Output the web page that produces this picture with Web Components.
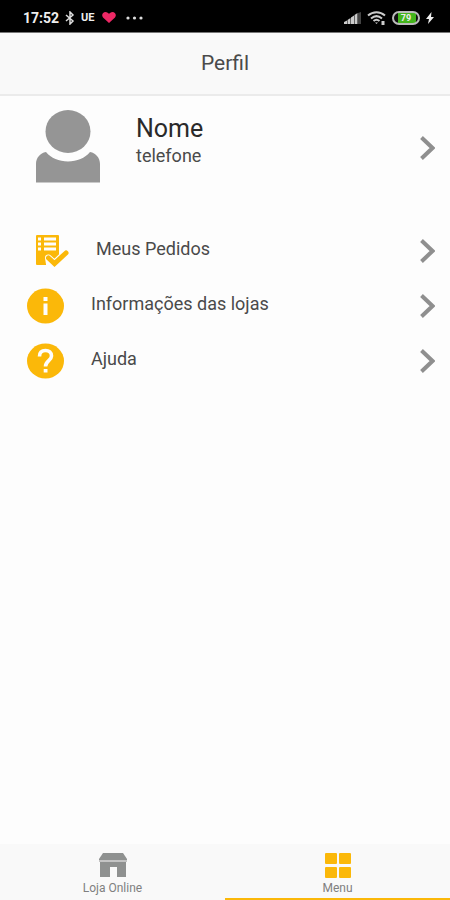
<!DOCTYPE html>
<html lang="pt-BR">
<head>
<meta charset="UTF-8">
<meta name="viewport" content="width=device-width, initial-scale=1">
<title>Perfil</title>
<style>
    body {
        margin: 0;
        font-family: Roboto, "Liberation Sans", sans-serif;
        color: #4a4a4a;
        background-color: #fdfdfd;
        --accent: #fbb809;
    }
</style>
</head>
<body>
<profile-page>
    <status-bar slot="top" time="17:52" battery="79"></status-bar>
    <app-header slot="top">Perfil</app-header>

    <profile-card>
        <span slot="name">Nome</span>
        <span slot="phone">telefone</span>
    </profile-card>

    <menu-list>
        <menu-row class="inset">
            <svg slot="icon" width="33" height="32" viewBox="0 0 33 32" fill="#fbb809" aria-hidden="true">
                <path d="M1 0h21a1 1 0 0 1 1 1v28a1 1 0 0 1-1 1H1a1 1 0 0 1-1-1V1a1 1 0 0 1 1-1z"/>
                <path d="M2 4h3M8 4h12M2 9h3M8 9h12M2 14h3M8 14h12" stroke="#fdfdfd" stroke-width="3"/>
                <path d="M12.500 23l6 5.500L30 17.500V32H14z" fill="#fdfdfd" stroke="#fdfdfd" stroke-width="7" stroke-linejoin="round"/>
                <path d="M12.500 23l6 5.500L30 18" fill="none" stroke="#fbb809" stroke-width="5" stroke-linecap="round"/>
            </svg>
            Meus Pedidos
        </menu-row>
        <menu-row>
            <svg slot="icon" width="37" height="36" viewBox="0 0 37 36" aria-hidden="true">
                <ellipse cx="18.500" cy="18" rx="18.500" ry="17.500" fill="#fbb809"/>
                <path d="M16.500 9h4v4h-4zM16.500 15.500h4V27h-4z" fill="#fdfdfd"/>
            </svg>
            Informações das lojas
        </menu-row>
        <menu-row>
            <svg slot="icon" width="37" height="36" viewBox="0 0 37 36" aria-hidden="true">
                <ellipse cx="18.500" cy="18" rx="18.500" ry="17.500" fill="#fbb809"/>
                <path d="M12.500 13.500c0-4 2.500-6 6-6s6 2 6 5.500c0 4.500-6 5-6 10.500" fill="none" stroke="#fdfdfd" stroke-width="3.600"/>
                <path d="M16.700 26h3.800v3.500h-3.800z" fill="#fdfdfd"/>
            </svg>
            Ajuda
        </menu-row>
    </menu-list>

    <tab-bar slot="bottom">
        <tab-item>
            <svg slot="icon" width="28" height="25" viewBox="0 0 28 25" fill="#8f9190" aria-hidden="true">
                <path d="M4 0h20l4 6v1H0V6z"/>
                <path d="M1 9h26v15h-9V14h-7v10H1z"/>
                <path d="M0 7h28v2H0z" fill="#c4c4c4"/>
            </svg>
            Loja Online
        </tab-item>
        <tab-item active>
            <svg slot="icon" width="28" height="25" viewBox="0 0 28 25" fill="#fbb809" aria-hidden="true">
                <rect x="1" y="0" width="12" height="11" rx="1"/>
                <rect x="15" y="0" width="12" height="11" rx="1"/>
                <rect x="1" y="14" width="12" height="11" rx="1"/>
                <rect x="15" y="14" width="12" height="11" rx="1"/>
            </svg>
            Menu
        </tab-item>
    </tab-bar>
</profile-page>

<script>
const chevron = `
    <svg width="15" height="24" viewBox="0 0 15 24" fill="none" stroke="#8f8f8f" stroke-width="4" aria-hidden="true">
        <path d="M1.500 1.500L12.500 12 1.500 22.500"/>
    </svg>
`;

class ProfilePage extends HTMLElement {
    constructor() {
        super();
        this.attachShadow({ mode: 'open' });
    }

    connectedCallback() {
        this.shadowRoot.innerHTML = `
            <style>
                :host {
                    display: flex;
                    flex-direction: column;
                    min-height: 100vh;
                }

                main {
                    flex: 1;
                }
            </style>

            <slot name="top"></slot>
            <main><slot></slot></main>
            <slot name="bottom"></slot>
        `;
    }
}

class StatusBar extends HTMLElement {
    constructor() {
        super();
        this.attachShadow({ mode: 'open' });
    }

    connectedCallback() {
        this.shadowRoot.innerHTML = `
            <style>
                :host {
                    display: flex;
                    align-items: center;
                    justify-content: space-between;
                    box-sizing: border-box;
                    height: 33px;
                    padding: 3px 16px 0 23px;
                    border-bottom: 1px solid #777;
                    background-color: #000;
                    color: #eee;
                    font-weight: 700;
                }

                .group {
                    display: flex;
                    align-items: center;
                    gap: 6px;
                }

                .time {
                    font-size: 14px;
                }

                .carrier {
                    font-size: 11px;
                }

                .heart {
                    margin: 0 4px 0 1px;
                }

                .battery {
                    display: flex;
                    align-items: center;
                    justify-content: center;
                    box-sizing: border-box;
                    width: 28px;
                    height: 14px;
                    border: 2px solid #bbb;
                    border-radius: 7px;
                    background: linear-gradient(90deg, #111 4px, #43b51c 4px, #43b51c 22px, #111 22px);
                    font-size: 9px;
                }
            </style>

            <div class="group">
                <span class="time">${this.getAttribute('time')}</span>
                <svg width="10" height="14" viewBox="0 0 10 14" fill="none" stroke="#ddd" stroke-width="1.500" aria-hidden="true">
                    <path d="M1 4l7 6-3 3V1l3 3-7 6"/>
                </svg>
                <span class="carrier">UE</span>
                <svg class="heart" width="14" height="11" viewBox="0 0 14 11" fill="#ed2865" aria-hidden="true">
                    <path d="M7 11L1 5.500C-1 3 1 0 3.500 0 5 0 6.500 1 7 2c.5-1 2-2 3.500-2C13 0 15 3 13 5.500z"/>
                </svg>
                <svg width="17" height="4" viewBox="0 0 17 4" fill="#ddd" aria-hidden="true">
                    <circle cx="2" cy="2" r="1.600"/>
                    <circle cx="8.500" cy="2" r="1.600"/>
                    <circle cx="15" cy="2" r="1.600"/>
                </svg>
            </div>
            <div class="group">
                <svg width="17" height="12" viewBox="0 0 17 12" fill="#ccc" aria-hidden="true">
                    <path d="M0 10l3-1.500V12H0zM3.500 8l3-2v6h-3zM7 5.500l3-2V12H7zM10.500 3l3-2v11h-3z"/>
                    <path d="M14 1l3-1v12h-3z" fill="#444"/>
                </svg>
                <svg width="19" height="14" viewBox="0 0 19 14" fill="none" stroke="#ccc" stroke-width="2" aria-hidden="true">
                    <path d="M1 4.500c5-4.500 12-4.500 17 0M4 7.500c3.500-3 7.500-3 11 0M6.500 10c2-1.700 4-1.700 6 0"/>
                    <path d="M8 11.500h3L9.500 13z" fill="#ccc" stroke="none"/>
                    <path d="M16 10v4" stroke-width="3"/>
                </svg>
                <div class="battery">${this.getAttribute('battery')}</div>
                <svg width="8" height="12" viewBox="0 0 8 12" fill="#eee" aria-hidden="true">
                    <path d="M5.500 0L0 7h3L2 12l6-7H5z"/>
                </svg>
            </div>
        `;
    }
}

class AppHeader extends HTMLElement {
    constructor() {
        super();
        this.attachShadow({ mode: 'open' });
    }

    connectedCallback() {
        this.shadowRoot.innerHTML = `
            <style>
                :host {
                    display: block;
                    border-bottom: 2px solid #ebebeb;
                    background-color: #f9f9f9;
                }

                h1 {
                    margin: 0;
                    font-size: 21px;
                    font-weight: 400;
                    line-height: 61px;
                    text-align: center;
                }
            </style>

            <h1><slot></slot></h1>
        `;
    }
}

class ProfileCard extends HTMLElement {
    constructor() {
        super();
        this.attachShadow({ mode: 'open' });
    }

    connectedCallback() {
        this.shadowRoot.innerHTML = `
            <style>
                :host {
                    display: block;
                }

                button {
                    display: flex;
                    align-items: center;
                    width: 100%;
                    height: 104px;
                    padding: 0 15px 0 35px;
                    border: 0;
                    background: none;
                    color: inherit;
                    font: inherit;
                    text-align: left;
                }

                .info {
                    display: flex;
                    flex: 1;
                    flex-direction: column;
                    margin-left: 35px;
                    padding-bottom: 14px;
                }

                .name {
                    color: #2a2a2a;
                    font-size: 25px;
                    line-height: 30px;
                }

                .phone {
                    font-size: 18px;
                    line-height: 24px;
                }
            </style>

            <button type="button">
                <svg width="66" height="76" viewBox="0 0 66 76" fill="#959595" aria-hidden="true">
                    <ellipse cx="33" cy="21.500" rx="22.500" ry="21.500"/>
                    <path d="M11 42c5 6 13 9.500 22 9.500S50 48 55 42c6 1 10 6 10 12v18.500H1V54c0-6 4-11 10-12z"/>
                </svg>
                <span class="info">
                    <span class="name"><slot name="name"></slot></span>
                    <span class="phone"><slot name="phone"></slot></span>
                </span>
                ${chevron}
            </button>
        `;
    }
}

class MenuList extends HTMLElement {
    constructor() {
        super();
        this.attachShadow({ mode: 'open' });
    }

    connectedCallback() {
        this.shadowRoot.innerHTML = `
            <style>
                :host {
                    display: block;
                    padding-top: 23px;
                }
            </style>

            <nav><slot></slot></nav>
        `;
    }
}

class MenuRow extends HTMLElement {
    constructor() {
        super();
        this.attachShadow({ mode: 'open' });
    }

    connectedCallback() {
        this.shadowRoot.innerHTML = `
            <style>
                :host {
                    display: block;
                }

                button {
                    display: flex;
                    align-items: center;
                    gap: 27px;
                    width: 100%;
                    height: 55px;
                    padding: 0 15px 0 27px;
                    border: 0;
                    background: none;
                    color: inherit;
                    font: inherit;
                    font-size: 18px;
                    text-align: left;
                }

                :host(.inset) button {
                    padding-left: 36px;
                }

                .label {
                    flex: 1;
                    padding-bottom: 4px;
                }
            </style>

            <button type="button">
                <slot name="icon"></slot>
                <span class="label"><slot></slot></span>
                ${chevron}
            </button>
        `;
    }
}

class TabBar extends HTMLElement {
    constructor() {
        super();
        this.attachShadow({ mode: 'open' });
    }

    connectedCallback() {
        this.shadowRoot.innerHTML = `
            <style>
                :host {
                    display: block;
                    background-color: #f9f9f9;
                }

                nav {
                    display: grid;
                    grid-template-columns: 1fr 1fr;
                }
            </style>

            <nav><slot></slot></nav>
        `;
    }
}

class TabItem extends HTMLElement {
    constructor() {
        super();
        this.attachShadow({ mode: 'open' });
    }

    connectedCallback() {
        this.shadowRoot.innerHTML = `
            <style>
                :host {
                    display: block;
                }

                button {
                    display: flex;
                    flex-direction: column;
                    align-items: center;
                    gap: 3px;
                    width: 100%;
                    padding: 9px 0 3px;
                    border: 0;
                    border-bottom: 2px solid transparent;
                    background: none;
                    color: #808080;
                    font: inherit;
                    font-size: 12px;
                    line-height: 14px;
                }

                :host([active]) button {
                    border-bottom-color: var(--accent);
                }
            </style>

            <button type="button">
                <slot name="icon"></slot>
                <span><slot></slot></span>
            </button>
        `;
    }
}

customElements.define('profile-page', ProfilePage);
customElements.define('status-bar', StatusBar);
customElements.define('app-header', AppHeader);
customElements.define('profile-card', ProfileCard);
customElements.define('menu-list', MenuList);
customElements.define('menu-row', MenuRow);
customElements.define('tab-bar', TabBar);
customElements.define('tab-item', TabItem);
</script>
</body>
</html>
